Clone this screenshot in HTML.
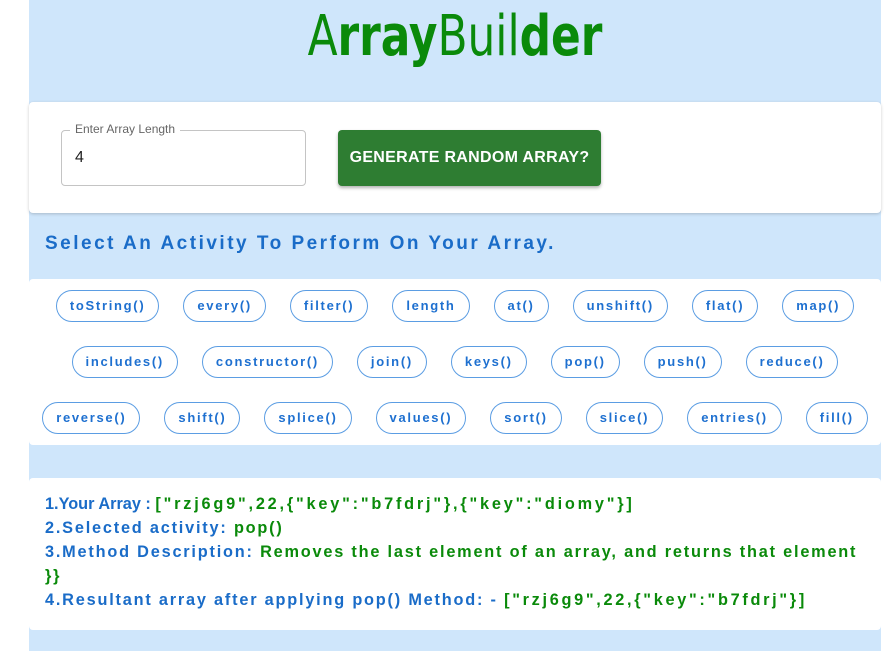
<!DOCTYPE html>
<html><head><style>
body{margin:0;background:#fff;width:894px;height:651px;overflow:hidden;font-family:"Liberation Sans",sans-serif}
.wrap{position:absolute;left:29px;top:0;width:852px;height:651px;background:#cfe6fb}
h1{margin:0;position:absolute;top:4px;left:0;width:100%;text-align:center;font-size:56px;font-weight:normal;color:#0a8a0a;font-family:"DejaVu Sans Condensed","Liberation Sans Narrow",sans-serif;transform:scaleX(0.87)}
.card{position:absolute;left:0;width:852px;background:#fff;border-radius:4px;box-shadow:0 1px 3px rgba(0,0,0,.2)}
.field{position:absolute;left:32px;top:28px;width:243px;height:54px;border:1px solid #c4c4c4;border-radius:4px}
.field label{position:absolute;top:-9px;left:8px;background:#fff;padding:0 5px;font-size:12px;color:#666}
.field span{position:absolute;left:13px;top:18px;font-size:16px;color:#222}
.btn{position:absolute;left:309px;top:28px;width:263px;height:56px;background:#2e7d32;border-radius:4px;color:#fff;font-weight:bold;font-size:16px;letter-spacing:0.3px;text-align:center;line-height:56px;box-shadow:0 2px 3px rgba(0,0,0,.3)}
.sel{position:absolute;left:16px;top:233px;font-size:19px;font-weight:bold;color:#1a6cc8;letter-spacing:2.5px}
.row{display:flex;justify-content:center;gap:24px;position:absolute;left:0;width:852px}
.chip{height:30px;border:1px solid #5b9de3;border-radius:16px;padding:0 13px;font-size:13px;font-weight:bold;color:#1e70d0;letter-spacing:1.7px;line-height:29px}
.res{position:absolute;left:16px;font-size:16.3px;font-weight:bold;letter-spacing:1.8px;color:#1a6cc8;white-space:nowrap}
.g{color:#0a8a0a}
</style></head><body>
<div class="wrap">
<h1>A<b>rray</b>Buil<b>der</b></h1>
<div class="card" style="top:102px;height:111px">
<div class="field"><label>Enter Array Length</label><span>4</span></div>
<div class="btn">GENERATE RANDOM ARRAY?</div>
</div>
<div class="sel">Select An Activity To Perform On Your Array.</div>
<div class="card" style="top:279px;height:166px;box-shadow:none">
<div class="row" style="top:11px"><div class="chip">toString()</div><div class="chip">every()</div><div class="chip">filter()</div><div class="chip">length</div><div class="chip">at()</div><div class="chip">unshift()</div><div class="chip">flat()</div><div class="chip">map()</div></div>
<div class="row" style="top:67px"><div class="chip">includes()</div><div class="chip">constructor()</div><div class="chip">join()</div><div class="chip">keys()</div><div class="chip">pop()</div><div class="chip">push()</div><div class="chip">reduce()</div></div>
<div class="row" style="top:123px"><div class="chip">reverse()</div><div class="chip">shift()</div><div class="chip">splice()</div><div class="chip">values()</div><div class="chip">sort()</div><div class="chip">slice()</div><div class="chip">entries()</div><div class="chip">fill()</div></div>
</div>
<div class="card" style="top:478px;height:152px;box-shadow:none">
<div class="res" style="top:17px;letter-spacing:0">1.Your Array : <span class="g" style="letter-spacing:2.8px">["rzj6g9",22,{"key":"b7fdrj"},{"key":"diomy"}]</span></div>
<div class="res" style="top:41px">2.Selected activity: <span class="g">pop()</span></div>
<div class="res" style="top:65px">3.Method Description: <span class="g">Removes the last element of an array, and returns that element</span></div>
<div class="res g" style="top:89px">}}</div>
<div class="res" style="top:113px">4.Resultant array after applying pop() Method: - <span class="g" style="letter-spacing:2.7px">["rzj6g9",22,{"key":"b7fdrj"}]</span></div>
</div>
</div>
</body></html>
